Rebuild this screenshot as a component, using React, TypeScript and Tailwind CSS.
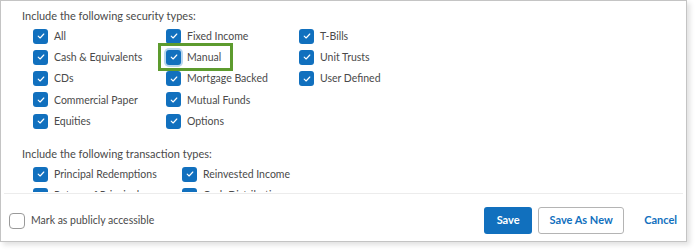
import React from "react";

const Check = () => (
  <svg viewBox="0 0 16 16" className="w-[10px] h-[10px]" fill="none">
    <path d="M3.5 8.3 L6.6 11.2 L12.5 4.8" stroke="white" strokeWidth="1.8" strokeLinecap="round" strokeLinejoin="round" />
  </svg>
);

const Box = ({ ring = false }: { ring?: boolean }) => (
  <span
    className={
      "flex items-center justify-center w-[15px] h-[15px] rounded-[3px] bg-[#1170be] shrink-0 " +
      (ring ? "shadow-[0_0_0_2px_#b9d6ee]" : "")
    }
  >
    <Check />
  </span>
);

const Item = ({ label, highlight = false }: { label: string; highlight?: boolean }) => (
  <div className="relative flex items-center h-[21.25px] gap-[6px]">
    <Box ring={highlight} />
    <span className="text-[10.5px] text-[#4a4a4a] leading-none">{label}</span>
    {highlight && (
      <div className="absolute left-[-8px] top-[-3.5px] w-[75px] h-[28px] border-[3px] border-[#5d9b2e]" />
    )}
  </div>
);

export default function App() {
  const col1 = ["All", "Cash & Equivalents", "CDs", "Commercial Paper", "Equities"];
  const col2 = ["Fixed Income", "Manual", "Mortgage Backed", "Mutual Funds", "Options"];
  const col3 = ["T-Bills", "Unit Trusts", "User Defined"];
  return (
    <div className="w-[697px] h-[251px] bg-white" style={{ fontFamily: "Lato, 'Open Sans', sans-serif" }}>
      <div className="w-[687px] h-[242px] border border-[#c4c4c4] bg-white flex flex-col shadow-[3px_3px_5px_rgba(0,0,0,0.12)]">
        <div className="h-[191px] overflow-hidden pl-[21px] pt-[7px] shrink-0">
          <div className="text-[11px] leading-[16px] text-[#4a4a4a]">Include the following security types:</div>
          <div className="flex pl-[11px] mt-[1.6px]">
            <div className="w-[133px] flex flex-col">
              {col1.map((l) => (
                <Item key={l} label={l} />
              ))}
            </div>
            <div className="w-[133px] flex flex-col">
              {col2.map((l) => (
                <Item key={l} label={l} highlight={l === "Manual"} />
              ))}
            </div>
            <div className="w-[133px] flex flex-col">
              {col3.map((l) => (
                <Item key={l} label={l} />
              ))}
            </div>
          </div>
          <div className="text-[11px] leading-[16px] text-[#4a4a4a] mt-[14.4px]">Include the following transaction types:</div>
          <div className="flex pl-[11px] mt-[1.4px]">
            <div className="w-[149px] flex flex-col">
              <Item label="Principal Redemptions" />
              <Item label="Return of Principal" />
            </div>
            <div className="w-[149px] flex flex-col">
              <Item label="Reinvested Income" />
              <Item label="Cash Distribution" />
            </div>
          </div>
        </div>
        <div className="mx-[3px] border-t border-[#ececec] mt-[1px]" />
        <div className="flex-1 flex items-center pl-[8px] pr-[8px] pt-[6px]">
          <span className="w-[16px] h-[16px] rounded-[4px] border border-[#9a9a9a] bg-white shrink-0" />
          <span className="ml-[6px] text-[10.5px] text-[#4a4a4a]">Mark as publicly accessible</span>
          <div className="ml-auto flex items-center">
            <button className="w-[48px] h-[27px] rounded-[3px] bg-[#1170be] text-white text-[11px] font-bold">Save</button>
            <button className="ml-[6px] w-[86px] h-[27px] rounded-[3px] border border-[#b4b4b4] bg-white text-[#1170be] text-[11px] font-bold">
              Save As New
            </button>
            <button className="ml-[20px] mr-[1px] text-[#1170be] text-[11px] font-bold">Cancel</button>
          </div>
        </div>
      </div>
    </div>
  );
}
